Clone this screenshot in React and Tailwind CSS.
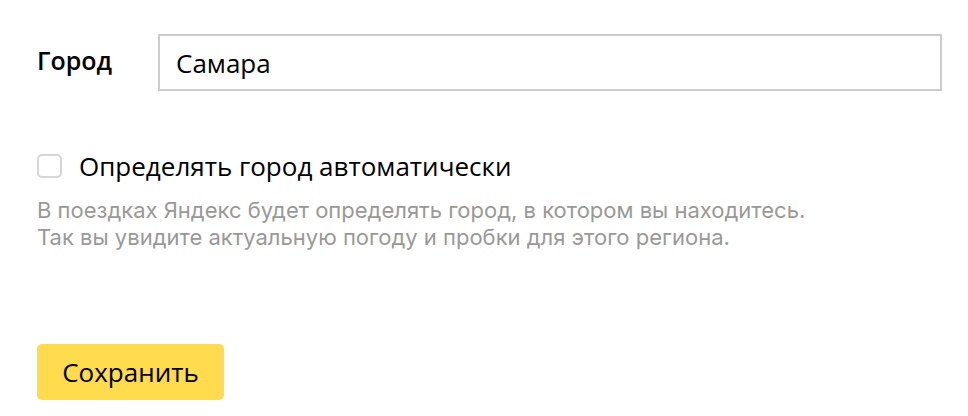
import React, { useState } from "react";

const App = () => {
  const [city, setCity] = useState("Самара");
  const [auto, setAuto] = useState(false);

  return (
    <div
      className="min-h-screen bg-white text-black pl-[37px] pr-[26px] pt-[34px]"
      style={{ fontFamily: '"Open Sans", "Liberation Sans", sans-serif' }}
    >
      <div className="flex items-center">
        <label className="w-[121px] shrink-0 mb-[5px] text-[25px] font-semibold leading-none">
          Город
        </label>
        <input
          value={city}
          onChange={(e) => setCity(e.target.value)}
          className="h-[57px] w-[784px] border-2 border-[#cccccc] px-4 text-[26px] outline-none"
        />
      </div>

      <label className="mt-[62px] flex items-center gap-[17px] cursor-pointer">
        <input
          type="checkbox"
          checked={auto}
          onChange={(e) => setAuto(e.target.checked)}
          className="h-[24px] w-[25px] appearance-none rounded-[5px] border-2 border-[#d6d6d6] bg-white"
        />
        <span className="text-[26px] leading-none">Определять город автоматически</span>
      </label>

      <div className="mt-[18px] flex flex-col font-['Inter',sans-serif] text-[22px] leading-[27px] text-[#999999]">
        <span>В поездках Яндекс будет определять город, в котором вы находитесь.</span>
        <span>Так вы увидите актуальную погоду и пробки для этого региона.</span>
      </div>

      <button className="mt-[93px] h-[56px] w-[187px] rounded-[5px] bg-[#ffdb4d] text-[26px]">
        Сохранить
      </button>
    </div>
  );
};

export default App;
